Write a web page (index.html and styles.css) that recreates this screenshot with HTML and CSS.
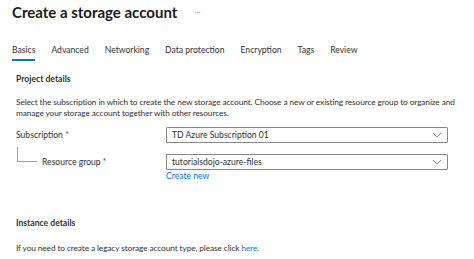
FILE: index.html
```html
<!DOCTYPE html>
<html lang="en">
<head>
    <meta charset="UTF-8">
    <meta name="viewport" content="width=device-width, initial-scale=1.0">
    <title>Create a storage account</title>
    <link rel="stylesheet" href="styles.css">
</head>
<body>
    <div class="page">
        <div class="title-bar">
            <h1 class="title">Create a storage account</h1>
            <span class="more">&middot;&middot;&middot;</span>
        </div>
        <div class="tabs">
            <span class="tab active">Basics</span>
            <span class="tab">Advanced</span>
            <span class="tab">Networking</span>
            <span class="tab">Data protection</span>
            <span class="tab">Encryption</span>
            <span class="tab">Tags</span>
            <span class="tab">Review</span>
        </div>
        <div class="content">
            <h2 class="section">Project details</h2>
            <p class="desc">Select the subscription in which to create the new storage account. Choose a new or existing resource group to organize and manage your storage account together with other resources.</p>
            <div class="field">
                <label class="label">Subscription <span class="req">*</span></label>
                <div class="select">
                    <span>TD Azure Subscription 01</span>
                    <svg class="chevron" width="10" height="6" viewBox="0 0 10 6"><path d="M1 1 L5 5 L9 1" fill="none" stroke="#8a8886" stroke-width="1"/></svg>
                </div>
            </div>
            <div class="field sub">
                <div class="tree"></div>
                <label class="label">Resource group <span class="req">*</span></label>
                <div class="control">
                    <div class="select">
                        <span>tutorialsdojo-azure-files</span>
                        <svg class="chevron" width="10" height="6" viewBox="0 0 10 6"><path d="M1 1 L5 5 L9 1" fill="none" stroke="#8a8886" stroke-width="1"/></svg>
                    </div>
                    <a class="link create">Create new</a>
                </div>
            </div>
            <h2 class="section instance">Instance details</h2>
            <p class="desc">If you need to create a legacy storage account type, please click <a class="link">here.</a></p>
        </div>
    </div>
</body>
</html>
```
FILE: styles.css
```css
body {
    margin: 0;
    background: #fff;
    color: #323130;
    font-family: 'Lato', sans-serif;
    font-size: 8.6px;
}

.page {
    width: 474px;
    height: 259px;
    overflow: hidden;
}

.title-bar {
    display: flex;
    align-items: center;
    padding: 0 0 0 12px;
    height: 23px;
}

.title {
    margin: 0;
    font-size: 15px;
    font-weight: 700;
    color: #1b1a19;
}

.more {
    margin-left: 17px;
    font-size: 8px;
    color: #a19f9d;
}

.tabs {
    display: flex;
    gap: 16px;
    padding: 22px 0 0 12px;
}

.tab {
    padding-bottom: 4px;
    color: #323130;
    border-bottom: 2px solid transparent;
}

.tab.active {
    border-color: #0078d4;
}

.content {
    padding: 13px 0 0 16px;
    width: 440px;
}

.section {
    margin: 0;
    font-size: 8.6px;
    font-weight: 700;
    color: #323130;
}

.desc {
    margin: 13px 0 0 0;
    font-size: 8.3px;
    letter-spacing: -0.1px;
    line-height: 11px;
}

.field {
    display: flex;
    align-items: flex-start;
    margin-top: 8px;
}

.label {
    width: 150px;
    padding-top: 3px;
}

.req {
    color: #a4262c;
}

.select {
    display: flex;
    align-items: center;
    justify-content: space-between;
    width: 270px;
    height: 14px;
    padding: 0 5px;
    border: 1px solid #8a8886;
    border-radius: 1px;
}

.field.sub {
    margin-top: 11px;
}

.tree {
    width: 19px;
    height: 14px;
    margin: -7px 5px 0 1px;
    border-left: 1px solid #a19f9d;
    border-bottom: 1px solid #a19f9d;
}

.field.sub .label {
    width: 124px;
}

.link {
    color: #0078d4;
    text-decoration: none;
}

.create {
    display: block;
    margin-top: 1px;
}

.section.instance {
    margin-top: 37px;
}

.section.instance + .desc {
    margin-top: 15px;
}
```
